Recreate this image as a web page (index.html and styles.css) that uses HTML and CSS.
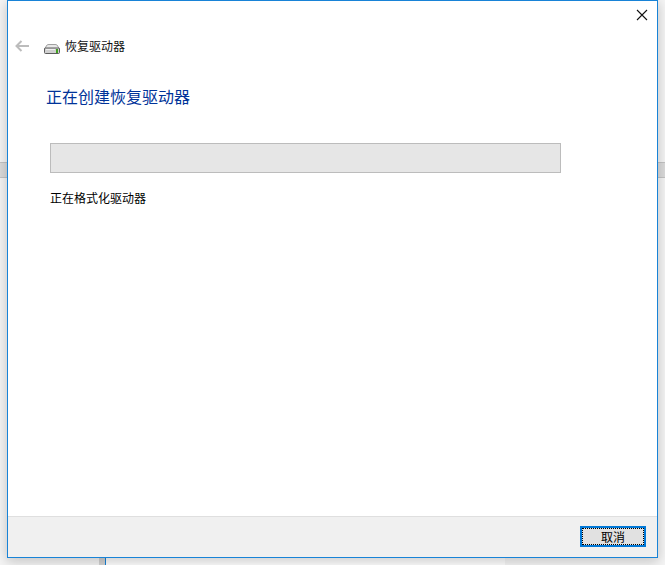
FILE: index.html
```html
<!DOCTYPE html>
<html lang="zh-CN">
<head>
<meta charset="utf-8">
<title>恢复驱动器</title>
<link rel="stylesheet" href="styles.css">
</head>
<body>
<div class="behind-band"></div>
<div class="behind-window"></div>
<div class="window">
  <div class="content">
    <div class="close-row">
      <svg class="close" width="12" height="12" viewBox="0 0 12 12"><path d="M1 1 L11 11 M11 1 L1 11" stroke="#111" stroke-width="1.1" fill="none"/></svg>
    </div>
    <div class="nav">
      <svg class="back" width="14" height="12" viewBox="0 0 14 12"><path d="M6.5 1 L1.5 6 L6.5 11 M1.5 6 H14" stroke="#bcbcbc" stroke-width="2" fill="none"/></svg>
      <svg class="drive" width="16" height="10" viewBox="0 0 16 10">
        <path d="M0.5 5 L3 1 Q3.5 0.5 5 0.5 H11 Q12.5 0.5 13 1 L15.5 5 Z" fill="#e8e8e8" stroke="#a0a0a0"/>
        <rect x="0.5" y="4" width="15" height="5.5" rx="1" fill="#d0d0d0" stroke="#5c5c5c"/>
        <rect x="2" y="5" width="9" height="1" fill="#f0f0f0"/>
        <rect x="12" y="5" width="2" height="4" fill="#3fa01e"/>
      </svg>
      <span class="nav-title">恢复驱动器</span>
    </div>
    <h1 class="heading">正在创建恢复驱动器</h1>
    <div class="progress"></div>
    <p class="status">正在格式化驱动器</p>
  </div>
  <div class="footer">
    <button class="cancel"><span class="cancel-inner">取消</span></button>
  </div>
</div>
</body>
</html>
```

FILE: styles.css
```css
* { box-sizing: border-box; }
html, body { margin: 0; height: 100%; }
body {
  position: relative;
  width: 665px;
  height: 565px;
  overflow: hidden;
  background: #f6f6f6;
  font-family: "Noto Sans CJK SC", "Liberation Sans", sans-serif;
}
.behind-band {
  position: absolute;
  left: 0;
  right: 0;
  top: 162px;
  height: 16px;
  background: #dcdcdc;
  border-top: 1px solid #c4c4c4;
  border-bottom: 1px solid #c4c4c4;
}
.behind-window {
  position: absolute;
  left: 105px;
  top: 540px;
  width: 400px;
  height: 40px;
  background: #fff;
  border-left: 1px solid #1883d7;
  box-shadow: -6px 0 0 #d2d2d2;
}
.window {
  position: absolute;
  left: 7px;
  top: 0;
  width: 651px;
  height: 558px;
  display: flex;
  flex-direction: column;
  background: #fff;
  border: 1px solid #1883d7;
  box-shadow: 0 3px 12px 1px rgba(0, 0, 0, 0.2);
}
.content { flex: 1; display: flex; flex-direction: column; }
.close-row {
  display: flex;
  justify-content: flex-end;
  height: 37px;
  padding: 8px 9px 0 0;
}
.nav {
  display: flex;
  align-items: center;
  height: 18px;
  padding-left: 7px;
}
.back { margin-right: 15px; margin-top: -2px; }
.drive { margin-right: 5px; margin-top: 4px; }
.nav-title { font-size: 12px; line-height: 16px; height: 18px; color: #111; }
.heading {
  margin: 28px 0 0 38px;
  font-size: 16px;
  font-weight: 400;
  line-height: 24px;
  height: 24px;
  color: #003399;
}
.progress {
  width: 511px;
  height: 30px;
  margin: 35px 0 0 42px;
  background: #e6e6e6;
  border: 1px solid #bcbcbc;
}
.status {
  margin: 16px 0 0 42px;
  font-size: 12px;
  line-height: 18px;
  color: #000;
}
.footer {
  display: flex;
  justify-content: flex-end;
  align-items: flex-start;
  height: 41px;
  padding: 9px 11px 0 0;
  background: #f0f0f0;
  border-top: 1px solid #dfdfdf;
}
.cancel {
  width: 66px;
  height: 21px;
  padding: 0;
  background: #e1e1e1;
  border: 2px solid #0078d7;
  font-family: inherit;
  font-size: 12px;
  color: #000;
}
.cancel-inner {
  display: flex;
  align-items: center;
  justify-content: center;
  height: 100%;
  border: 1px dotted #000;
  line-height: 15px;
}
```
